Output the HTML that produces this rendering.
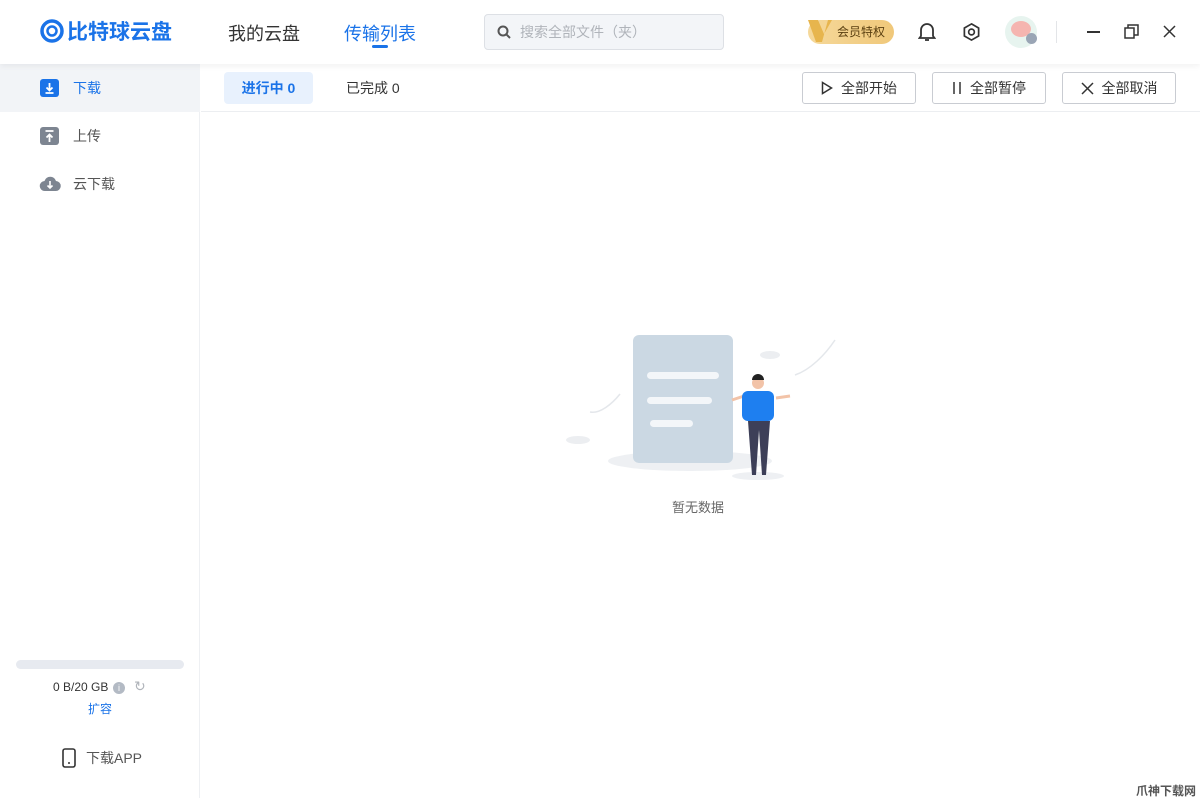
<!DOCTYPE html>
<html><head><meta charset="utf-8"><style>
*{margin:0;padding:0;box-sizing:border-box}
body{width:1200px;height:798px;overflow:hidden;background:#fff;font-family:"Liberation Sans","Noto Sans CJK SC",sans-serif;position:relative;color:#333}
.abs{position:absolute;white-space:nowrap}
.top{position:absolute;left:0;top:0;width:1200px;height:64px;background:#fff;box-shadow:0 2px 6px rgba(0,0,0,.06);z-index:2}
.side{position:absolute;left:0;top:64px;width:200px;height:734px;background:#fff;border-right:1px solid #eef0f3}
.btn{position:absolute;top:72px;height:32px;border:1px solid #c9ccd2;border-radius:3px;font-size:14px;color:#333;display:flex;align-items:center;justify-content:center;gap:8px}
</style></head><body>
<div class="top">
 <svg class="abs" style="left:40px;top:19px" width="24" height="24" viewBox="0 0 24 24"><circle cx="12" cy="12" r="10" fill="none" stroke="#1a73e8" stroke-width="3.5"/><circle cx="12" cy="12" r="4.5" fill="none" stroke="#1a73e8" stroke-width="2.5"/></svg>
 <div class="abs" style="left:67px;top:16px;font-size:21px;font-weight:bold;color:#1a73e8;letter-spacing:0px">比特球云盘</div>
 <div class="abs" style="left:228px;top:20px;font-size:18px;color:#333">我的云盘</div>
 <div class="abs" style="left:344px;top:20px;font-size:18px;color:#1a73e8">传输列表</div>
 <div class="abs" style="left:372px;top:45px;width:16px;height:3px;background:#1a73e8;border-radius:2px"></div>
 <div class="abs" style="left:484px;top:14px;width:240px;height:36px;background:#f3f5f8;border:1px solid #dde0e5;border-radius:4px"></div>
 <svg class="abs" style="left:497px;top:25px" width="14" height="14" viewBox="0 0 14 14"><circle cx="6" cy="6" r="4.5" fill="none" stroke="#555" stroke-width="2"/><path d="M9.5 9.5L13 13" stroke="#555" stroke-width="2"/></svg>
 <div class="abs" style="left:520px;top:22px;font-size:14px;color:#b0b4ba">搜索全部文件（夹）</div>
 <div class="abs" style="left:808px;top:20px;width:86px;height:24px;border-radius:12px;background:linear-gradient(90deg,#f5d89a,#f0c87a)"></div>
 <svg class="abs" style="left:806px;top:16px" width="30" height="30" viewBox="0 0 30 30"><path d="M2 4h10l6 14 8-14h-4l-6 22h-6z" fill="#e7b54d"/></svg>
 <div class="abs" style="left:837px;top:23px;font-size:12px;color:#5a3f10">会员特权</div>
 <svg class="abs" style="left:918px;top:22px" width="18" height="20" viewBox="0 0 18 20"><path d="M3 14V8a6 6 0 0112 0v6l1.5 2h-15z" fill="none" stroke="#333" stroke-width="1.8"/><path d="M7 18h4" stroke="#333" stroke-width="1.8"/></svg>
 <svg class="abs" style="left:962px;top:22px" width="19" height="20" viewBox="0 0 20 20"><path d="M10 1.5l7.5 4.3v8.4L10 18.5 2.5 14.2V5.8z" fill="none" stroke="#333" stroke-width="1.8"/><circle cx="10" cy="10" r="3" fill="none" stroke="#333" stroke-width="1.8"/></svg>
 <div class="abs" style="left:1005px;top:16px;width:32px;height:32px;border-radius:50%;background:#e7f4ef"></div>
 <div class="abs" style="left:1011px;top:21px;width:20px;height:16px;border-radius:50%;background:#f5b5b0"></div>
 <div class="abs" style="left:1026px;top:33px;width:11px;height:11px;border-radius:50%;background:#9aa5b5"></div>
 <div class="abs" style="left:1056px;top:21px;width:1px;height:22px;background:#e3e5e8"></div>
 <div class="abs" style="left:1087px;top:31px;width:13px;height:1.5px;background:#333"></div>
 <svg class="abs" style="left:1124px;top:24px" width="15" height="15" viewBox="0 0 15 15"><rect x="1" y="4" width="9" height="10" fill="none" stroke="#333" stroke-width="1.5"/><path d="M4 4V1h10v10h-4" fill="none" stroke="#333" stroke-width="1.5"/></svg>
 <svg class="abs" style="left:1163px;top:25px" width="13" height="13" viewBox="0 0 13 13"><path d="M1 1l11 11M12 1L1 12" stroke="#333" stroke-width="1.5"/></svg>
</div>
<div class="side">
 <div class="abs" style="left:0;top:0;width:200px;height:48px;background:#f2f4f7"></div>
 <div class="abs" style="left:40px;top:15px;width:19px;height:18px;border-radius:3px;background:#1a73e8"></div>
 <svg class="abs" style="left:40px;top:15px" width="19" height="18" viewBox="0 0 19 18"><path d="M9.5 4v7M6.5 8.5l3 3 3-3M5.5 14h8" stroke="#fff" stroke-width="1.8" fill="none"/></svg>
 <div class="abs" style="left:73px;top:14px;font-size:14px;color:#1a73e8">下载</div>
 <div class="abs" style="left:40px;top:63px;width:19px;height:18px;border-radius:3px;background:#7d8591"></div>
 <svg class="abs" style="left:40px;top:63px" width="19" height="18" viewBox="0 0 19 18"><path d="M5.5 4h8M9.5 15V8M6.5 10.5l3-3 3 3" stroke="#fff" stroke-width="1.8" fill="none"/></svg>
 <div class="abs" style="left:73px;top:62px;font-size:14px;color:#555">上传</div>
 <svg class="abs" style="left:39px;top:111px" width="22" height="18" viewBox="0 0 22 18"><path d="M6 16a5 5 0 01-.5-10A6 6 0 0117 6a5 5 0 01-.5 10z" fill="#7d8591"/><path d="M11 6v7M8.5 10.5l2.5 2.5 2.5-2.5" stroke="#fff" stroke-width="1.6" fill="none"/></svg>
 <div class="abs" style="left:73px;top:110px;font-size:14px;color:#555">云下载</div>
 <div class="abs" style="left:16px;top:596px;width:168px;height:9px;border-radius:5px;background:#e7eaf0"></div>
 <div class="abs" style="left:53px;top:616px;font-size:12px;color:#333">0 B/20 GB</div>
 <div class="abs" style="left:113px;top:618px;width:12px;height:12px;border-radius:50%;background:#b3bac4;color:#fff;font-size:9px;text-align:center;line-height:12px">i</div>
 <div class="abs" style="left:134px;top:614px;font-size:14px;color:#b0b4ba">↻</div>
 <div class="abs" style="left:88px;top:636px;font-size:12px;color:#1a73e8">扩容</div>
 <svg class="abs" style="left:62px;top:684px" width="14" height="20" viewBox="0 0 14 20"><rect x="1" y="1" width="12" height="18" rx="2" fill="none" stroke="#333" stroke-width="1.6"/><circle cx="7" cy="15" r="1" fill="#333"/></svg>
 <div class="abs" style="left:86px;top:684px;font-size:14px;color:#555">下载APP</div>
</div>
<div class="abs" style="left:201px;top:111px;width:999px;height:1px;background:#eceef1"></div>
<div class="abs" style="left:224px;top:72px;width:89px;height:32px;border-radius:4px;background:#e8f1fd;color:#1a73e8;font-size:14px;font-weight:bold;text-align:center;line-height:32px">进行中 0</div>
<div class="abs" style="left:346px;top:78px;font-size:14px;color:#333">已完成 0</div>
<div class="btn" style="left:802px;width:114px"><svg width="12" height="14" viewBox="0 0 12 14"><path d="M1.5 1.5l9 5.5-9 5.5z" fill="none" stroke="#333" stroke-width="1.5"/></svg>全部开始</div>
<div class="btn" style="left:932px;width:114px"><svg width="10" height="14" viewBox="0 0 10 14"><path d="M2 1v12M8 1v12" stroke="#333" stroke-width="1.5"/></svg>全部暂停</div>
<div class="btn" style="left:1062px;width:114px"><svg width="13" height="13" viewBox="0 0 13 13"><path d="M1 1l11 11M12 1L1 12" stroke="#333" stroke-width="1.5"/></svg>全部取消</div>
<svg class="abs" style="left:560px;top:330px" width="280" height="155" viewBox="560 330 280 155">
 <ellipse cx="690" cy="461" rx="82" ry="10" fill="#eef0f3"/>
 <ellipse cx="758" cy="476" rx="26" ry="4" fill="#eef0f3"/>
 <path d="M590 412c10 2 22-8 30-18" stroke="#e4e7eb" fill="none" stroke-width="1.5"/>
 <path d="M795 375c15-5 30-20 40-35" stroke="#e4e7eb" fill="none" stroke-width="1.5"/>
 <ellipse cx="578" cy="440" rx="12" ry="4" fill="#eceef1"/>
 <ellipse cx="770" cy="355" rx="10" ry="4" fill="#eceef1"/>
 <rect x="633" y="335" width="100" height="128" rx="6" fill="#cbd8e3"/>
 <rect x="647" y="372" width="72" height="7" rx="3.5" fill="#f3f6f9"/>
 <rect x="647" y="397" width="65" height="7" rx="3.5" fill="#f3f6f9"/>
 <rect x="650" y="420" width="43" height="7" rx="3.5" fill="#f3f6f9"/>
 <path d="M732 400l12-4M790 396l-14 2" stroke="#f2c3a8" stroke-width="3"/>
 <rect x="742" y="391" width="32" height="30" rx="6" fill="#1e7ff0"/>
 <circle cx="758" cy="383" r="6" fill="#f2c3a8"/>
 <path d="M752 380a6 6 0 0112 0z" fill="#222"/>
 <path d="M748 421h22l-4 54h-4l-3-45-3 45h-4z" fill="#3d3f58"/>
</svg>
<div class="abs" style="left:672px;top:497px;font-size:13px;color:#666">暂无数据</div>
<div class="abs" style="left:1136px;top:782px;font-size:12px;font-weight:bold;color:#555">爪神下载网</div>
</body></html>
